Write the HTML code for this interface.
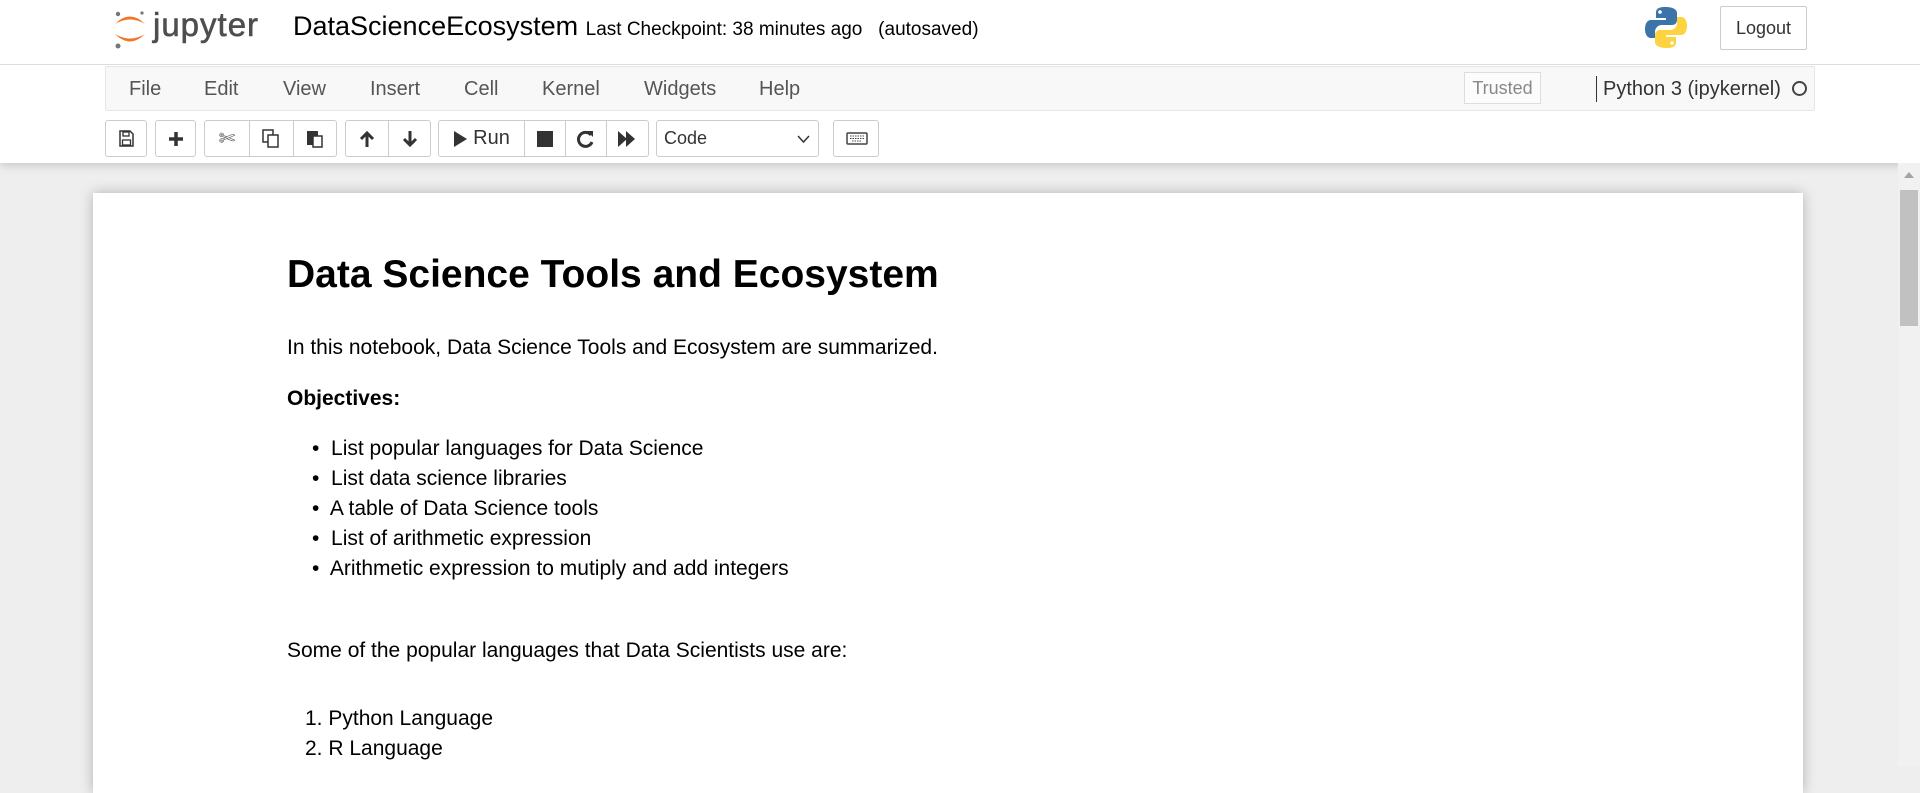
<!DOCTYPE html>
<html><head><meta charset="utf-8"><style>
*{box-sizing:border-box;margin:0;padding:0}
body{width:1920px;height:766px;overflow:hidden;background:#eee;font-family:"Liberation Sans",Arial,sans-serif;position:relative;color:#000}
.hdr{position:absolute;left:0;top:0;width:1920px;height:163px;background:#fff;box-shadow:0 3px 8px rgba(0,0,0,.15)}
.line{position:absolute;left:0;top:64px;width:1920px;height:1px;background:#ddd}
.abs{position:absolute}
.menu{position:absolute;left:105px;top:66px;width:1710px;height:45px;background:#f8f8f8;border:1px solid #e7e7e7;border-radius:2px}
.menu span{position:absolute;top:11px;font-size:20px;color:#555}
.btn{position:absolute;top:120px;height:37px;border:1px solid #ccc;border-radius:3px;background:#fff}
.btn i{position:absolute;top:0;height:35px;border-right:1px solid #ccc}
.ic{position:absolute;top:0;height:35px;display:flex;align-items:center;justify-content:center;font-size:20px;color:#333}
.panel{position:absolute;left:93px;top:193px;width:1710px;height:600px;background:#fff;box-shadow:0 0 12px rgba(0,0,0,.25)}
.txt{position:absolute;left:287px;font-size:21px;line-height:30px;white-space:nowrap}
</style></head><body>
<div class="hdr">
 <svg class="abs" style="left:110px;top:6px" width="40" height="46" viewBox="0 0 40 46">
  <path d="M5 18 Q20 3 35 18 Q20 9 5 18Z" fill="#f37626"/>
  <path d="M5 28 Q20 43 35 28 Q20 37 5 28Z" fill="#f37626"/>
  <circle cx="8" cy="8" r="2.2" fill="#767677"/><circle cx="32" cy="7" r="1.6" fill="#767677"/><circle cx="8" cy="40" r="2.5" fill="#767677"/>
 </svg>
 <div class="abs" style="left:153px;top:6px;font-size:33px;color:#4e4e4e;letter-spacing:1px;-webkit-text-stroke:0.6px #4e4e4e">jupyter</div>
 <div class="abs" style="left:293px;top:11px;font-size:27px;color:#000">DataScienceEcosystem <span style="font-size:19px">Last Checkpoint: 38 minutes ago &nbsp; (autosaved)</span></div>
 <svg class="abs" style="left:1645px;top:6px" width="42" height="43" viewBox="0 0 42 43">
  <path d="M20 1c-9 0-9 4-9 6v5h10v2H6c-4 0-6 4-6 9s2 9 6 9h4v-6c0-4 3-7 7-7h10c3 0 5-2 5-5V7c0-3-3-6-12-6z" fill="#3b74a8"/>
  <circle cx="15" cy="6" r="1.8" fill="#fff"/>
  <path d="M22 42c9 0 9-4 9-6v-5H21v-2h15c4 0 6-4 6-9s-2-9-6-9h-4v6c0 4-3 7-7 7H15c-3 0-5 2-5 5v7c0 3 3 6 12 6z" fill="#fdd340"/>
  <circle cx="27" cy="37" r="1.8" fill="#fff"/>
 </svg>
 <div class="abs" style="left:1720px;top:6px;width:87px;height:44px;border:1px solid #ccc;border-radius:2px;font-size:18px;color:#333;display:flex;align-items:center;justify-content:center">Logout</div>
 <div class="line"></div>
 <div class="menu">
  <span style="left:23px">File</span><span style="left:98px">Edit</span><span style="left:177px">View</span><span style="left:264px">Insert</span><span style="left:358px">Cell</span><span style="left:436px">Kernel</span><span style="left:538px">Widgets</span><span style="left:653px">Help</span>
  <div class="abs" style="left:1358px;top:5px;width:77px;height:32px;border:1px solid #ddd;font-size:18px;color:#888;display:flex;align-items:center;justify-content:center;background:#fcfcfc">Trusted</div>
  <div class="abs" style="left:1490px;top:9px;width:1px;height:26px;background:#333"></div>
  <span style="left:1497px;color:#333">Python 3 (ipykernel)</span>
  <div class="abs" style="left:1686px;top:14px;width:15px;height:15px;border:2px solid #444;border-radius:50%"></div>
 </div>
 <div class="btn" style="left:105px;width:42px"><svg class="abs" style="left:13px;top:9px" width="15" height="17" viewBox="0 0 15 17"><path d="M1 1h10l3 3v12H1z" fill="none" stroke="#333" stroke-width="1.5"/><rect x="4" y="2" width="6" height="4" fill="none" stroke="#333" stroke-width="1.3"/><rect x="3.5" y="10" width="8" height="5" fill="none" stroke="#333" stroke-width="1.3"/></svg></div>
 <div class="btn" style="left:155px;width:41px"><svg class="abs" style="left:12px;top:10px" width="16" height="16"><path d="M8 1v14M1 8h14" stroke="#333" stroke-width="3.5"/></svg></div>
 <div class="btn" style="left:204px;width:133px"><i style="left:44px"></i><i style="left:88px"></i>
  <div class="ic" style="left:0;width:44px;color:#555">✄</div>
  <svg class="abs" style="left:57px;top:8px" width="18" height="20"><rect x="1" y="1" width="10" height="12" fill="none" stroke="#333" stroke-width="1.5"/><rect x="6" y="6" width="10" height="12" fill="#fff" stroke="#333" stroke-width="1.5"/></svg>
  <svg class="abs" style="left:101px;top:8px" width="18" height="20"><rect x="1" y="2" width="11" height="14" fill="#333"/><rect x="7" y="7" width="9" height="11" fill="#fff" stroke="#333" stroke-width="1.5"/></svg></div>
 <div class="btn" style="left:345px;width:86px"><i style="left:42px"></i>
  <svg class="abs" style="left:13px;top:9px" width="16" height="18"><path d="M8 17V3M2 9l6-6 6 6" fill="none" stroke="#333" stroke-width="3"/></svg>
  <svg class="abs" style="left:56px;top:9px" width="16" height="18"><path d="M8 1v14M2 9l6 6 6-6" fill="none" stroke="#333" stroke-width="3"/></svg></div>
 <div class="btn" style="left:438px;width:211px"><i style="left:85px"></i><i style="left:126px"></i><i style="left:167px"></i>
  <div class="ic" style="left:0;width:85px"><svg width="14" height="16" style="margin-right:6px"><path d="M1 0l13 8-13 8z" fill="#333"/></svg>Run</div>
  <svg class="abs" style="left:98px;top:10px" width="16" height="16"><rect width="16" height="16" fill="#333"/></svg>
  <svg class="abs" style="left:138px;top:9px" width="18" height="18"><path d="M14 5A7 7 0 1 0 15 12" fill="none" stroke="#333" stroke-width="3"/><path d="M10 1l6 0 0 6z" fill="#333"/></svg>
  <svg class="abs" style="left:179px;top:10px" width="18" height="16"><path d="M0 0l9 8-9 8zM8 0l9 8-9 8z" fill="#333"/></svg></div>
 <div class="btn" style="left:656px;width:163px"><div class="ic" style="left:7px;font-size:18px">Code</div><svg class="abs" style="left:140px;top:14px" width="13" height="9"><path d="M1 1l5.5 6L12 1" fill="none" stroke="#333" stroke-width="1.5"/></svg></div>
 <div class="btn" style="left:833px;width:46px"><svg class="abs" style="left:12px;top:11px" width="22" height="13"><rect x="1" y="1" width="20" height="11" rx="1" fill="none" stroke="#444" stroke-width="1.5"/><path d="M4 4h14M4 6.5h14M6 9h10" stroke="#444" stroke-width="1" stroke-dasharray="1.5 1"/></svg></div>
</div>
<div class="panel"></div>
<div class="txt" style="top:250px;font-size:39px;font-weight:bold;line-height:50px">Data Science Tools and Ecosystem</div>
<div class="txt" style="top:333px">In this notebook, Data Science Tools and Ecosystem are summarized.</div>
<div class="txt" style="top:384px;font-weight:bold">Objectives:</div>
<div class="txt" style="top:434px;left:312px">•&nbsp; List popular languages for Data Science<br>•&nbsp; List data science libraries<br>•&nbsp; A table of Data Science tools<br>•&nbsp; List of arithmetic expression<br>•&nbsp; Arithmetic expression to mutiply and add integers</div>
<div class="txt" style="top:636px">Some of the popular languages that Data Scientists use are:</div>
<div class="txt" style="top:704px;left:305px">1. Python Language<br>2. R Language</div>
<div class="abs" style="left:1898px;top:163px;width:22px;height:603px;background:#f1f1f1"></div>
<div class="abs" style="left:1904px;top:172px;width:0;height:0;border-left:5px solid transparent;border-right:5px solid transparent;border-bottom:6px solid #a3a3a3"></div>
<div class="abs" style="left:1900px;top:190px;width:18px;height:136px;background:#c1c1c1"></div>
</body></html>
